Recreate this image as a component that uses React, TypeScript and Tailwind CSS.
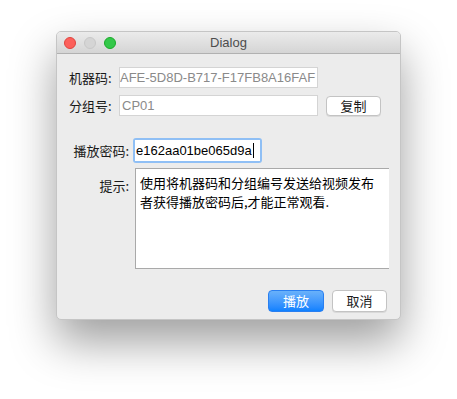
import React from 'react'

const CJK = "font-['PingFang_SC','Noto_Sans_CJK_SC',sans-serif]"
const LATIN = "font-['Liberation_Sans','Noto_Sans_CJK_SC',sans-serif]"

function TrafficLights() {
  return (
    <div className="flex items-center gap-2">
      <span className="h-3 w-3 rounded-full border border-[#e0443e] bg-[#fc605b]" />
      <span className="h-3 w-3 rounded-full border border-[#c8c8c8] bg-[#d5d5d5]" />
      <span className="h-3 w-3 rounded-full border border-[#1aab29] bg-[#34c84a]" />
    </div>
  )
}

export default function App() {
  return (
    <div className="h-[399px] w-[457px] overflow-hidden bg-white pl-[56px] pt-[31px]">
      <div className="w-[345px] overflow-hidden rounded-[5px] border border-[#c5c5c5] bg-[#ececec] shadow-[0_22px_45px_rgba(0,0,0,0.38)]">
        {/* title bar */}
        <div className="relative flex h-[22px] items-center border-b border-[#b1b1b1] bg-gradient-to-b from-[#ebebeb] to-[#d5d5d5] pl-[7px]">
          <TrafficLights />
          <span className={`absolute inset-x-0 text-center text-[13px] text-[#4d4d4d] ${LATIN}`}>Dialog</span>
        </div>

        {/* body */}
        <div className={`flex flex-col text-[13px] text-[#1a1a1a] ${CJK}`}>
          <div className="mt-[13px] flex items-center">
            <span className="ml-[12px] w-[50px]">机器码:</span>
            <div className={`flex h-[21px] w-[199px] items-center overflow-hidden border border-[#d4d4d4] bg-white text-[13px] text-[#8a8a8a] ${LATIN}`}>
              AFE-5D8D-B717-F17FB8A16FAF
            </div>
          </div>

          <div className="mt-[7px] flex items-center">
            <span className="ml-[12px] w-[50px]">分组号:</span>
            <div className={`flex h-[21px] w-[199px] items-center border border-[#d4d4d4] bg-white pl-[2px] text-[13px] text-[#8a8a8a] ${LATIN}`}>
              CP01
            </div>
            <button className="ml-[8px] flex h-[20px] w-[55px] items-center justify-center rounded-[4px] border border-[#c3c3c3] bg-white text-[13px] text-[#1a1a1a] shadow-[0_1px_0_rgba(0,0,0,0.08)]">
              复制
            </button>
          </div>

          <div className="mt-[22px] flex items-center">
            <span className="ml-[15px] w-[57px] text-right">播放密码:</span>
            <div className="ml-[4px] rounded-[3px] bg-[#8fbff5] p-[2px]">
              <div className={`flex h-[21px] w-[125px] items-center bg-white pl-[1px] text-[13px] text-black ${LATIN}`}>
                e162aa01be065d9a<span className="ml-px h-[15px] w-px bg-black" />
              </div>
            </div>
          </div>

          <div className="mt-[5px] flex items-start">
            <span className="ml-[15px] mt-[8px] w-[57px] text-right">提示:</span>
            <div className="ml-[6px] h-[101px] w-[254px] border border-r-0 border-[#a9a9a9] bg-white px-[4px] pt-[4px] leading-[19px] text-black">
              使用将机器码和分组编号发送给视频发布者获得播放密码后,才能正常观看.
            </div>
          </div>

          <div className="mb-[7px] mt-[21px] flex justify-end gap-[8px] pr-[13px]">
            <button className="flex h-[22px] w-[56px] items-center justify-center rounded-[4px] border border-[#2a7ff0] bg-gradient-to-b from-[#69b1fa] to-[#0d81ff] text-[13px] text-white">
              播放
            </button>
            <button className="flex h-[22px] w-[55px] items-center justify-center rounded-[4px] border border-[#c3c3c3] bg-white text-[13px] text-[#1a1a1a] shadow-[0_1px_0_rgba(0,0,0,0.08)]">
              取消
            </button>
          </div>
        </div>
      </div>
    </div>
  )
}
